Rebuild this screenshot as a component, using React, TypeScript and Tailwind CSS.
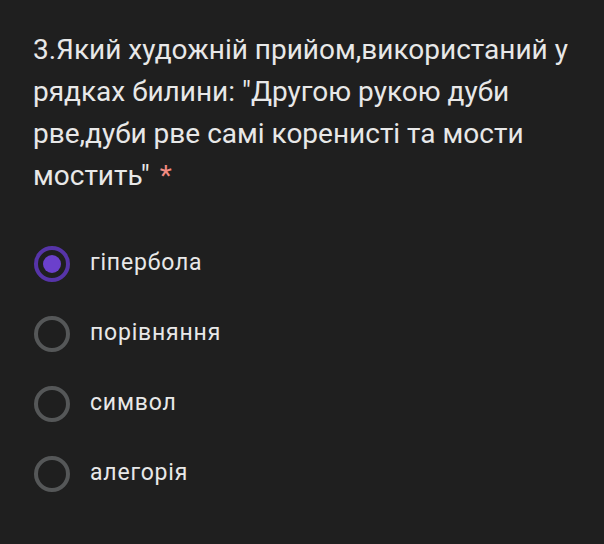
const options = ["гіпербола", "порівняння", "символ", "алегорія"];

function Radio({ checked }: { checked: boolean }) {
  if (checked) {
    return (
      <div className="w-[36px] h-[36px] rounded-full border-[4px] border-[#5634a8] flex items-center justify-center shrink-0">
        <div className="w-[18px] h-[18px] rounded-full bg-[#6b40cc]" />
      </div>
    );
  }
  return <div className="w-[36px] h-[36px] rounded-full border-[4px] border-[#555758] shrink-0" />;
}

export default function App() {
  return (
    <div
      className="w-[604px] h-[544px] bg-[#1f1f1f] text-[#e8e8e8] overflow-hidden"
      style={{ fontFamily: "Roboto, 'Noto Sans', sans-serif" }}
    >
      <div className="pl-[33px] pr-2 pt-[29px]">
        <h2 className="text-[28px] leading-[42px] tracking-[0px]">
          3.Який художній прийом,використаний у рядках билини: "Другою рукою дуби
          рве,дуби рве самі коренисті та мости мостить"
          <span className="text-[#f28b82] ml-[10px]">*</span>
        </h2>
      </div>
      <div className="pl-[34px] pt-[49px] flex flex-col gap-[34px]">
        {options.map((opt, i) => (
          <div key={opt} className="flex items-center gap-[20px] h-[36px]">
            <Radio checked={i === 0} />
            <span className="text-[23px] tracking-[0.8px] pb-[2px]">{opt}</span>
          </div>
        ))}
      </div>
    </div>
  );
}
